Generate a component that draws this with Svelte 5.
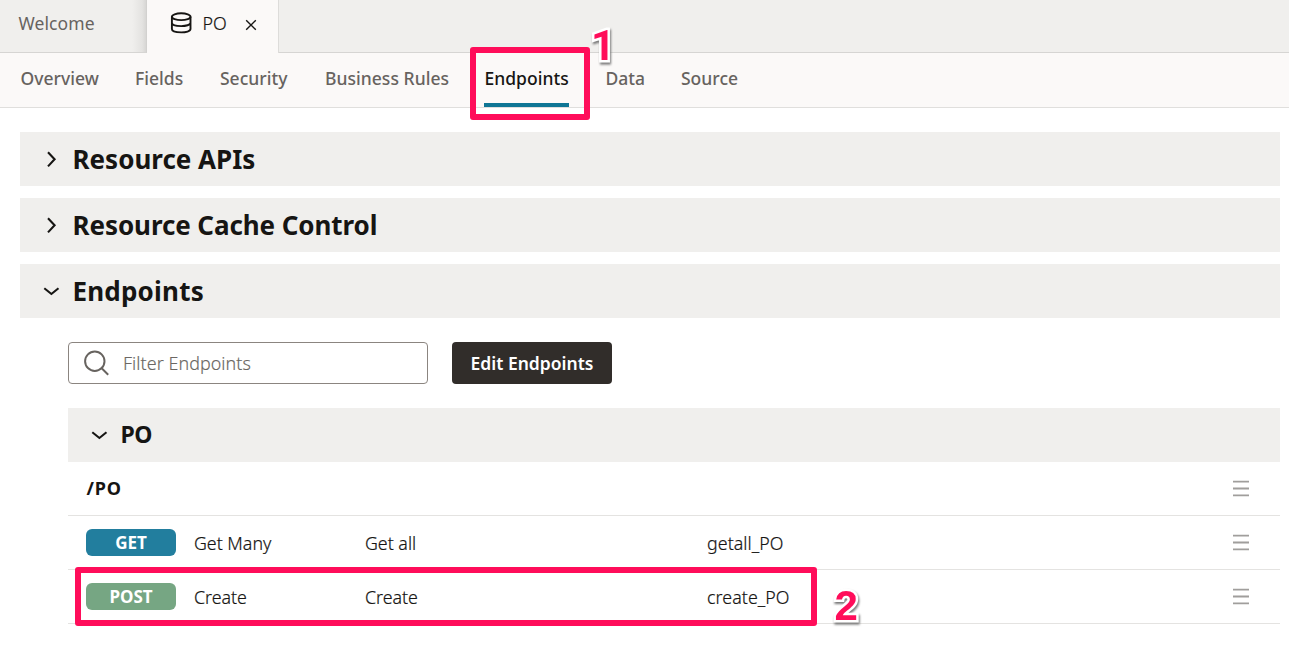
<script>
  const nav = [
    { label: 'Overview', width: 78.5 },
    { label: 'Fields', width: 49 },
    { label: 'Security', width: 69 },
    { label: 'Business Rules', width: 123.5 },
    { label: 'Endpoints', width: 85, active: true },
    { label: 'Data', width: 39.5 },
    { label: 'Source', width: 58 }
  ];
  const sections = [
    { label: 'Resource APIs', cls: 'apis' },
    { label: 'Resource Cache Control', cls: 'cache' },
    { label: 'Endpoints', cls: 'ends', open: true }
  ];
  const rows = [
    { method: 'GET', name: 'Get Many', desc: 'Get all', id: 'getall_PO' },
    { method: 'POST', name: 'Create', desc: 'Create', id: 'create_PO' }
  ];
</script>

{#snippet chevron(open)}
  <svg class="chevron" width="18" height="18" viewBox="0 0 18 18">
    <path d={open ? 'M2.3 6.2 9.4 12 16.5 6.2' : 'M6 2.2 12.6 9.3 6 16.4'} />
  </svg>
{/snippet}

{#snippet burger()}
  <svg class="burger" width="16" height="18" viewBox="0 0 16 18">
    <path d="M0 2.7H16M0 9.5H16M0 16.3H16" />
  </svg>
{/snippet}

<div class="page">
  <header class="tabs">
    <div class="tab welcome"><span>Welcome</span></div>
    <div class="tab current">
      <svg class="db" width="22" height="22" viewBox="0 0 22 22">
        <ellipse cx="11.2" cy="4.7" rx="9.3" ry="3.4" />
        <path d="M1.9 4.7V17C1.9 21.5 20.5 21.5 20.5 17V4.7M1.9 10.8C1.9 15.2 20.5 15.2 20.5 10.8" />
      </svg>
      <span class="tab-name">PO</span>
      <svg class="close" width="12" height="12" viewBox="0 0 12 12"><path d="M1.2 1.2 10.8 10.8M10.8 1.2 1.2 10.8" /></svg>
    </div>
    <div class="rest"></div>
  </header>

  <nav>
    {#each nav as n}
      <a class:active={n.active} style="width: {n.width}px"><span>{n.label}</span></a>
    {/each}
  </nav>

  <main>
    {#each sections as s}
      <div class="section">
        {@render chevron(s.open)}
        <h2 class={s.cls}>{s.label}</h2>
      </div>
    {/each}

    <div class="body">
      <div class="tools">
        <div class="search">
          <svg width="26" height="26" viewBox="0 0 26 26"><circle cx="10.8" cy="11.2" r="9.7" /><path d="M17.7 18.2 24.2 24.7" /></svg>
          <span>Filter Endpoints</span>
        </div>
        <button>Edit Endpoints</button>
      </div>
      <div class="group">
        {@render chevron(true)}
        <h3>PO</h3>
      </div>
      <div class="row path"><strong>/PO</strong>{@render burger()}</div>
      {#each rows as r}
        <div class="row">
          <span class="badge {r.method.toLowerCase()}">{r.method}</span>
          <span class="name">{r.name}</span>
          <span class="desc">{r.desc}</span>
          <span class="id">{r.id}</span>
          {@render burger()}
        </div>
      {/each}
    </div>
  </main>

  <div class="mark first"></div>
  <div class="mark second"></div>
  <div class="num one">1</div>
  <div class="num two">2</div>
</div>

<style>
  :global(body) { background: #fff; }
  * { box-sizing: border-box; }
  .page {
    position: relative;
    width: 1289px;
    height: 650px;
    overflow: hidden;
    font-family: 'Noto Sans', sans-serif;
    font-size: 17.5px;
    color: #161513;
    white-space: nowrap;
  }
  svg { flex: none; fill: none; stroke: #161513; }
  .tabs { display: flex; height: 53px; }
  .welcome {
    width: 147px;
    padding: 11px 0 0 18.5px;
    border-right: 1px solid #d2d1cf;
    border-bottom: 1px solid #d6d5d3;
    background: linear-gradient(90deg, transparent 132px, #e4e3e1 142px, #d4d3d1 147px), #f0efed;
    color: #67635f;
    font-weight: 450;
    letter-spacing: 0.1px;
  }
  .current {
    display: flex;
    width: 132px;
    padding-left: 23px;
    background: #fbf9f8;
    border-right: 1px solid #dddcda;
  }
  .db { margin-top: 12px; stroke-width: 1.9; }
  .tab-name {
    width: 25px;
    margin: 11px 18px 0 10.5px;
    margin-right: 17.5px;
    font-size: 17.9px;
    line-height: 24px;
    font-weight: 300;
    -webkit-text-stroke: 0.2px;
  }
  .close { margin-top: 19px; stroke-width: 1.4; }
  .rest { flex: 1; background: #f0efed; border-bottom: 1px solid #d6d5d3; }
  nav {
    display: flex;
    gap: 36px;
    height: 55px;
    padding-left: 20px;
    background: #fbf9f8;
    border-bottom: 1px solid #e0dfdd;
    color: #67635f;
    font-weight: 480;
    letter-spacing: 0.05px;
  }
  nav a { padding-top: 13px; }
  nav span { margin-left: 0.4px; }
  .active { color: #161513; border-bottom: 4px solid #0f7695; font-weight: 500; }
  main { padding: 24px 9px 0 20px; }
  .section, .group {
    display: flex;
    align-items: center;
    height: 54px;
    background: #f0efed;
  }
  .section { margin-bottom: 12px; padding-left: 22px; }
  .chevron { stroke-width: 2.1; }
  h2, h3 { margin: 0; font-weight: 700; }
  h2 { margin-left: 12.5px; font-size: 26px; line-height: 36px; }
  .cache { letter-spacing: -0.08px; }
  .ends { letter-spacing: 0.2px; }
  .body { padding: 12px 0 0 48px; }
  .tools { display: flex; gap: 24px; height: 42px; margin-bottom: 24px; }
  .search {
    display: flex;
    align-items: center;
    width: 360px;
    padding-left: 15px;
    border: 1px solid #8b8580;
    border-radius: 4px;
    color: #6b6763;
    font-weight: 300;
  }
  .search svg { margin-right: 13px; stroke: #67635f; stroke-width: 2; }
  .search span { font-size: 17.9px; letter-spacing: 0.06px; -webkit-text-stroke: 0.15px; }
  button {
    width: 160px;
    padding: 0;
    border: 0;
    border-radius: 4px;
    background: #312d2a;
    color: #fff;
    font: 600 17.5px 'Noto Sans', sans-serif;
  }
  .group { padding-left: 22px; }
  h3 { margin: -3px 0 0 12.5px; font-size: 23px; letter-spacing: -0.5px; }
  .row {
    display: flex;
    align-items: center;
    height: 54px;
    padding: 0 31px 0 18px;
    border-bottom: 1px solid #e4e3e1;
    font-weight: 300;
  }
  .row strong { margin: -2px 0 0 0.5px; font-size: 18px; font-weight: 700; letter-spacing: 0.8px; }
  .badge {
    width: 90px;
    height: 27px;
    margin-right: 18px;
    border-radius: 6px;
    color: #fff;
    font-size: 17px;
    line-height: 28px;
    font-weight: 700;
    text-align: center;
  }
  .get { background: #227e9e; }
  .post { background: #76a683; }
  .name, .desc, .id { font-size: 17.8px; line-height: 24px; -webkit-text-stroke: 0.2px; }
  .name { width: 171px; }
  .desc { width: 342px; }
  .id { letter-spacing: 0.08px; }
  .burger { margin: -2px 0 0 auto; stroke: #a09e9c; stroke-width: 1.8; }
  .mark { position: absolute; border: 6px solid #ff0d5a; border-radius: 3px; }
  .first { left: 470px; top: 47px; width: 120px; height: 73px; }
  .second { left: 75px; top: 567px; width: 742px; height: 59px; }
  .num {
    position: absolute;
    font: 700 42px/42px 'Liberation Sans', sans-serif;
    color: #ff0d5a;
    -webkit-text-stroke: 5px #fff;
    paint-order: stroke fill;
    filter: drop-shadow(1px 2px 1px #777);
  }
  .one { left: 591px; top: 24.5px; font-family: Roboto, sans-serif; }
  .two { left: 834.5px; top: 585px; }
</style>
